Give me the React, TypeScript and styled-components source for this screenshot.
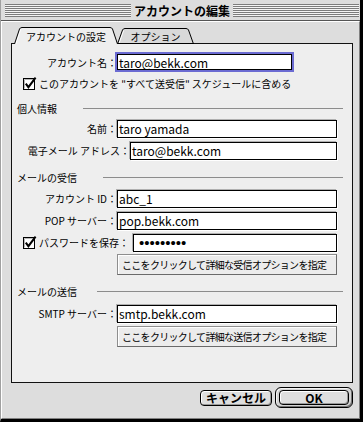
import React from "react";
import styled, { createGlobalStyle } from "styled-components";

const FONT = `"Noto Sans CJK JP", "Noto Sans", sans-serif`;

const GlobalStyle = createGlobalStyle`
  html, body { margin: 0; padding: 0; background: #dddddd; }
  body { font-family: ${FONT}; color: #000; }
  * { box-sizing: border-box; }
`;

const Window = styled.div`
  width: 363px;
  height: 422px;
  display: flex;
  flex-direction: column;
  background: #dddddd;
  border-left: 1px solid #a0a0a0;
  border-right: 3px solid #000;
  border-bottom: 3px solid #000;
  font-family: ${FONT};
`;

const TitleBar = styled.div`
  height: 21px;
  flex: none;
  display: flex;
  align-items: flex-start;
  padding: 4px 1px 0 4px;
  border-bottom: 1px solid #555;
`;

const Stripes = styled.div`
  flex: 1;
  height: 13px;
  background: repeating-linear-gradient(
    to bottom,
    #7c7c7c 0px,
    #7c7c7c 1px,
    #f4f4f4 1px,
    #f4f4f4 2px
  );
`;

const Title = styled.div`
  flex: none;
  padding: 0 3px;
  height: 13px;
  font-size: 12px;
  font-weight: 700;
  line-height: 13px;
  white-space: nowrap;
`;

const Body = styled.div`
  flex: 1;
  display: flex;
  flex-direction: column;
  border-top: 1px solid #fff;
  border-left: 1px solid #fff;
  border-right: 1px solid #808080;
  border-bottom: 1px solid #808080;
  padding: 5px 6px 0 9px;
`;

const TabBar = styled.div`
  position: relative;
  z-index: 1;
  display: flex;
  align-items: flex-end;
  height: 17px;
  margin-bottom: -1px;
  padding-left: 3px;
`;

const TabItem = styled.div<{ $active?: boolean; $w: number }>`
  position: relative;
  z-index: ${(p) => (p.$active ? 2 : 1)};
  width: ${(p) => p.$w}px;
  height: ${(p) => (p.$active ? 17 : 16)}px;
  margin-left: ${(p) => (p.$active ? 0 : -1)}px;
  display: flex;
  align-items: center;
  justify-content: center;
  font-size: 10px;
  white-space: nowrap;
`;

const TabShape = styled.svg`
  position: absolute;
  left: 0;
  top: 0;
  z-index: 0;
`;

const TabText = styled.span`
  position: relative;
  z-index: 1;
  padding-top: 1px;
`;

const Tab: React.FC<{ active?: boolean; w: number; label: string }> = ({ active, w, label }) => {
  const h = active ? 17 : 16;
  const outline = `M0.5,${h} L5.5,2 Q6.2,0.5 8,0.5 L${w - 8},0.5 Q${w - 6.2},0.5 ${w - 5.5},2 L${w - 0.5},${h}`;
  return (
    <TabItem $active={active} $w={w}>
      <TabShape width={w} height={h} viewBox={`0 0 ${w} ${h}`}>
        <path d={`${outline} Z`} fill={active ? "#eeeeee" : "#d9d9d9"} />
        <path d={`M1.8,${h} L6.6,2.6`} stroke="#fff" fill="none" />
        <path d={outline} stroke="#000" fill="none" />
        {!active && <path d={`M0,${h - 0.5} L${w},${h - 0.5}`} stroke="#000" />}
      </TabShape>
      <TabText>{label}</TabText>
    </TabItem>
  );
};

const Panel = styled.div`
  height: 340px;
  flex: none;
  display: flex;
  flex-direction: column;
  background: #eeeeee;
  border: 1px solid #111;
  padding: 7px 0 0 5px;
`;

const Row = styled.div<{ $mt?: number; $h?: number; $pl?: number }>`
  display: flex;
  align-items: center;
  height: ${(p) => p.$h ?? 21}px;
  margin-top: ${(p) => p.$mt ?? 0}px;
  padding-left: ${(p) => p.$pl ?? 0}px;
  flex: none;
`;

const Label = styled.span<{ $w: number }>`
  width: ${(p) => p.$w}px;
  flex: none;
  text-align: right;
  font-size: 10px;
  white-space: nowrap;
`;

const CheckLabel = styled.label<{ $w?: number }>`
  display: flex;
  align-items: center;
  width: ${(p) => (p.$w ? `${p.$w}px` : "auto")};
  padding-left: 6px;
  flex: none;
  font-size: 10px;
  white-space: nowrap;
`;

const CheckText = styled.span`
  margin-left: 2px;
`;

const Field = styled.div<{ $w: number; $focus?: boolean }>`
  width: ${(p) => p.$w}px;
  height: ${(p) => (p.$focus ? 16 : 18)}px;
  flex: none;
  display: flex;
  align-items: center;
  background: #fff;
  border: 1px solid #000;
  padding-left: 1px;
  font-size: 12px;
  white-space: nowrap;
  box-shadow: ${(p) => (p.$focus ? "0 0 0 2px #6b6bd2" : "1px 1px 0 #ffffff, -1px -1px 0 #b0b0b0")};
`;

const Dots = styled.span`
  font-family: "Liberation Sans", Arial, sans-serif;
  font-size: 15px;
  letter-spacing: 0;
  padding-left: 4px;
`;

const Header = styled.div<{ $mt: number }>`
  display: flex;
  align-items: center;
  height: 20px;
  flex: none;
  margin-top: ${(p) => p.$mt}px;
  padding-right: 9px;
  font-size: 10px;
  white-space: nowrap;
`;

const Rule = styled.div<{ $gap: number }>`
  flex: 1;
  height: 1px;
  margin-left: ${(p) => p.$gap}px;
  background: #8c8c8c;
`;

const OptionButton = styled.button<{ $mt: number }>`
  display: block;
  flex: none;
  margin: ${(p) => p.$mt}px 0 0 100px;
  width: 220px;
  height: 21px;
  padding: 0 0 0 4px;
  text-align: left;
  font-family: ${FONT};
  font-size: 10px;
  letter-spacing: -0.7px;
  color: #000;
  background: #ececec;
  border: 1px solid #8e8e8e;
  border-right-color: #6a6a6a;
  border-bottom-color: #6a6a6a;
  box-shadow: inset 1px 1px 0 #fff;
  white-space: nowrap;
`;

const ButtonRow = styled.div`
  display: flex;
  justify-content: flex-end;
  align-items: center;
  gap: 3px;
  margin-top: 4px;
  height: 21px;
  flex: none;
`;

const PushButton = styled.button<{ $w: number; $h: number }>`
  width: ${(p) => p.$w}px;
  height: ${(p) => p.$h}px;
  padding: 0;
  border: 1px solid #000;
  border-radius: 4px;
  background: #dedede;
  box-shadow: inset 1px 1px 0 #fff, inset -1px -1px 0 #9a9a9a;
  font-family: ${FONT};
  font-size: 12px;
  font-weight: 700;
  line-height: 1;
  color: #000;
  white-space: nowrap;
`;

const DefaultRing = styled.div`
  border: 1px solid #000;
  border-radius: 6px;
  padding: 2px 3px;
  background: #d4d4d4;
  box-shadow: inset 1px 1px 0 #f4f4f4, inset -1px -1px 0 #777;
  display: flex;
`;

const CheckBox: React.FC = () => (
  <svg width="14" height="14" viewBox="0 0 14 14">
    <rect x="0.5" y="1.5" width="11" height="11" fill="#fff" stroke="#000" />
    <path d="M1.5,2.5 H10.5 M1.5,2.5 V11.5" stroke="#b8b8b8" fill="none" />
    <path d="M2.8,6.6 L5.4,10.2 L12.6,0.6" stroke="#000" strokeWidth="2" fill="none" strokeLinejoin="miter" />
  </svg>
);

export default function App() {
  return (
    <>
      <GlobalStyle />
      <Window>
        <TitleBar>
          <Stripes />
          <Title>アカウントの編集</Title>
          <Stripes />
        </TitleBar>
        <Body>
          <TabBar>
            <Tab active w={104} label="アカウントの設定" />
            <Tab w={77} label="オプション" />
          </TabBar>
          <Panel>
            <Row $h={22}>
              <Label $w={100}>アカウント名：</Label>
              <Field $w={175} $focus>taro@bekk.com</Field>
            </Row>
            <Row>
              <CheckLabel>
                <CheckBox />
                <CheckText>このアカウントを "すべて送受信" スケジュールに含める</CheckText>
              </CheckLabel>
            </Row>

            <Header $mt={4}>
              個人情報
              <Rule $gap={26} />
            </Header>
            <Row>
              <Label $w={100}>名前：</Label>
              <Field $w={220}>taro yamada</Field>
            </Row>
            <Row $mt={1}>
              <Label $w={113}>電子メール アドレス：</Label>
              <Field $w={207}>taro@bekk.com</Field>
            </Row>

            <Header $mt={6}>
              メールの受信
              <Rule $gap={26} />
            </Header>
            <Row $mt={1}>
              <Label $w={100}>アカウント ID：</Label>
              <Field $w={220}>abc_1</Field>
            </Row>
            <Row $mt={1}>
              <Label $w={100}>POP サーバー：</Label>
              <Field $w={220}>pop.bekk.com</Field>
            </Row>
            <Row $mt={1}>
              <CheckLabel $w={116}>
                <CheckBox />
                <CheckText>パスワードを保存：</CheckText>
              </CheckLabel>
              <Field $w={204}>
                <Dots>•••••••••</Dots>
              </Field>
            </Row>
            <OptionButton $mt={1}>ここをクリックして詳細な受信オプションを指定</OptionButton>

            <Header $mt={6}>
              メールの送信
              <Rule $gap={20} />
            </Header>
            <Row $mt={2}>
              <Label $w={100}>SMTP サーバー：</Label>
              <Field $w={220}>smtp.bekk.com</Field>
            </Row>
            <OptionButton $mt={2}>ここをクリックして詳細な送信オプションを指定</OptionButton>
          </Panel>
          <ButtonRow>
            <PushButton $w={72} $h={16}>キャンセル</PushButton>
            <DefaultRing>
              <PushButton $w={70} $h={15}>OK</PushButton>
            </DefaultRing>
          </ButtonRow>
        </Body>
      </Window>
    </>
  );
}
